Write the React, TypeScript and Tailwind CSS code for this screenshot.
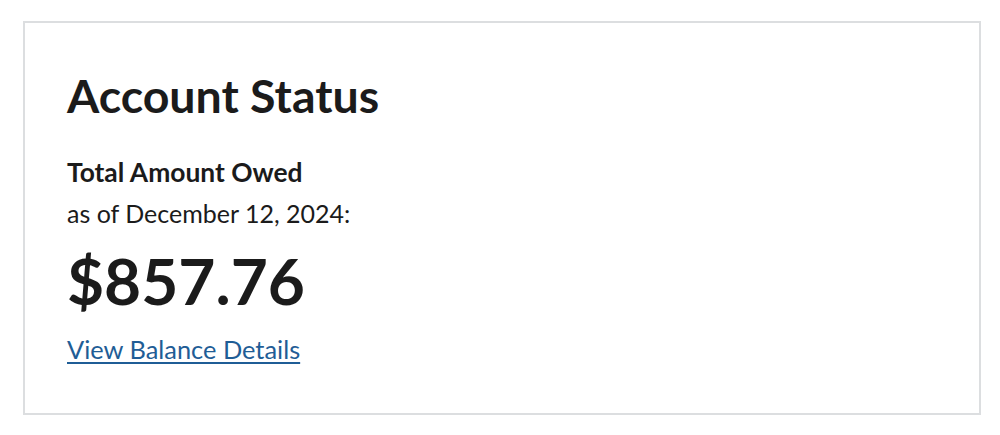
import React from "react";

const App = () => {
  return (
    <div className="w-[1000px] h-[435px] bg-white pt-[21px] pl-[23px] pr-[19px]" style={{ fontFamily: "Lato, 'Noto Sans', sans-serif" }}>
      <div className="h-[394px] border-2 border-[#dcdee0] pl-[42px] pt-[46px] text-[#1b1b1b]">
        <h2 className="text-[46.5px] font-bold leading-[52px]">Account Status</h2>
        <p className="mt-[36px] text-[26.4px] font-bold leading-[30px]">Total Amount Owed</p>
        <p className="mt-[8px] text-[25px] leading-[36px]">as of December 12, 2024:</p>
        <p className="mt-[12px] text-[64px] font-bold leading-[76px]">$857.76</p>
        <a href="#" className="mt-[15px] inline-block text-[25.4px] leading-[30px] text-[#1f5d96] underline underline-offset-[3px] decoration-2">
          View Balance Details
        </a>
      </div>
    </div>
  );
};

export default App;
